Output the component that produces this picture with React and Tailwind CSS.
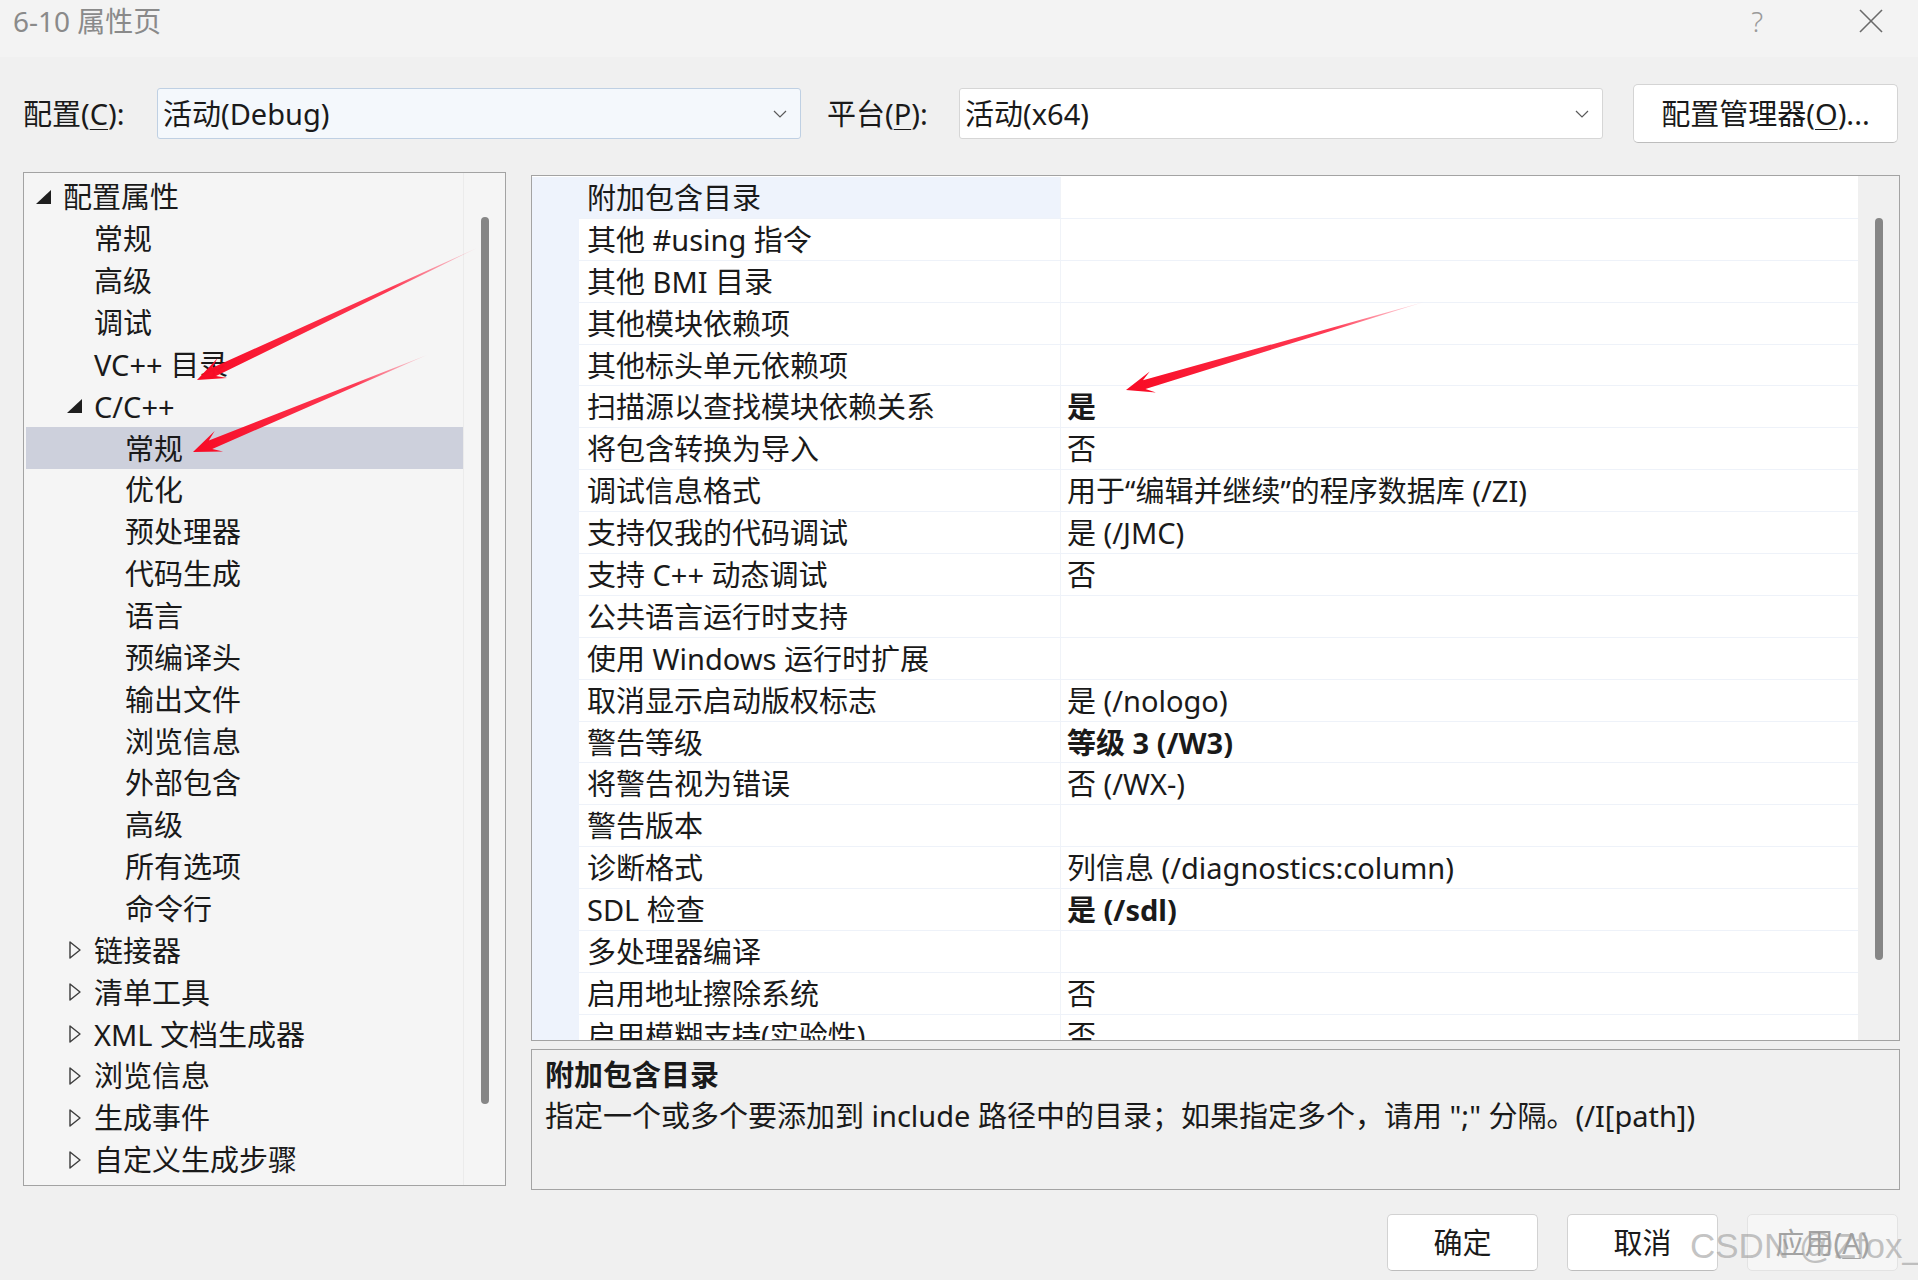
import React from 'react';

// 树形导航数据：[层级, 展开状态, 文本, 是否选中]
const treeItems = [
  [0, 'open', '配置属性'],
  [1, null, '常规'],
  [1, null, '高级'],
  [1, null, '调试'],
  [1, null, 'VC++ 目录'],
  [1, 'open', 'C/C++'],
  [2, null, '常规', true],
  [2, null, '优化'],
  [2, null, '预处理器'],
  [2, null, '代码生成'],
  [2, null, '语言'],
  [2, null, '预编译头'],
  [2, null, '输出文件'],
  [2, null, '浏览信息'],
  [2, null, '外部包含'],
  [2, null, '高级'],
  [2, null, '所有选项'],
  [2, null, '命令行'],
  [1, 'closed', '链接器'],
  [1, 'closed', '清单工具'],
  [1, 'closed', 'XML 文档生成器'],
  [1, 'closed', '浏览信息'],
  [1, 'closed', '生成事件'],
  [1, 'closed', '自定义生成步骤'],
];

// 属性表：[名称, 值, 是否加粗]
const props = [
  ['附加包含目录', ''],
  ['其他 #using 指令', ''],
  ['其他 BMI 目录', ''],
  ['其他模块依赖项', ''],
  ['其他标头单元依赖项', ''],
  ['扫描源以查找模块依赖关系', '是', true],
  ['将包含转换为导入', '否'],
  ['调试信息格式', '用于“编辑并继续”的程序数据库 (/ZI)'],
  ['支持仅我的代码调试', '是 (/JMC)'],
  ['支持 C++ 动态调试', '否'],
  ['公共语言运行时支持', ''],
  ['使用 Windows 运行时扩展', ''],
  ['取消显示启动版权标志', '是 (/nologo)'],
  ['警告等级', '等级 3 (/W3)', true],
  ['将警告视为错误', '否 (/WX-)'],
  ['警告版本', ''],
  ['诊断格式', '列信息 (/diagnostics:column)'],
  ['SDL 检查', '是 (/sdl)', true],
  ['多处理器编译', ''],
  ['启用地址擦除系统', '否'],
  ['启用模糊支持(实验性)', '否'],
];

const Chevron = () => (
  <svg width="14" height="8" viewBox="0 0 14 8" className="shrink-0">
    <polyline points="1,1 7,7 13,1" fill="none" stroke="#5a5a5a" strokeWidth="1.2" />
  </svg>
);

const Toggle = ({ state, level }) => {
  if (state === 'open') {
    return (
      <svg width="15" height="14" viewBox="0 0 15 14" className={level === 0 ? 'ml-[5px]' : 'ml-[5px]'}>
        <polygon points="15,0 15,14 0,14" fill="#1e1e1e" />
      </svg>
    );
  }
  if (state === 'closed') {
    return (
      <svg width="12" height="18" viewBox="0 0 12 18" className="ml-[7px]">
        <polygon points="1,1 11,9 1,17" fill="none" stroke="#3c3c3c" strokeWidth="1.4" strokeLinejoin="round" />
      </svg>
    );
  }
  return null;
};

const indent = ['pl-[5px]', 'pl-[36px]', 'pl-[67px]'];

const Tree = () => (
  <div className="w-[483px] h-[1014px] border border-[#a3a3a3] bg-[#f5f5f5] flex">
    <div className="flex-1 pl-[2px] pt-[3px] flex flex-col">
      {treeItems.map(([level, state, text, selected], i) => (
        <div
          key={i}
          className={`h-[41.86px] flex items-center ${indent[level]} ${selected ? 'bg-[#cdd0dc]' : ''}`}
        >
          <div className="w-[32px] flex items-center">
            <Toggle state={state} level={level} />
          </div>
          <span className="whitespace-nowrap">{text}</span>
        </div>
      ))}
    </div>
    <div className="w-[42px] border-l border-[#ebebeb] pt-[44px] flex justify-center">
      <div className="w-[8px] h-[887px] rounded-full bg-[#868686]" />
    </div>
  </div>
);

const Grid = () => (
  <div className="h-[866px] border border-[#a3a3a3] bg-white flex overflow-hidden">
    <div className="flex-1 flex flex-col pt-[1px] overflow-hidden">
      {props.map(([name, value, bold], i) => (
        <div key={i} className="h-[41.9px] shrink-0 flex">
          <div className="w-[47px] bg-[#eef3fc]" />
          <div className="flex-1 flex border-b border-[#eef2f9]">
            <div
              className={`w-[482px] flex items-center pl-[8px] border-r border-[#f0f3f8] whitespace-nowrap ${i === 0 ? 'bg-[#eef3fc]' : ''}`}
            >
              {name}
            </div>
            <div className={`flex-1 flex items-center pl-[6px] whitespace-nowrap ${bold ? 'font-bold' : ''}`}>
              {value}
            </div>
          </div>
        </div>
      ))}
    </div>
    <div className="w-[41px] bg-[#f0f0f0] pt-[42px] flex justify-center">
      <div className="w-[8px] h-[742px] rounded-full bg-[#868686]" />
    </div>
  </div>
);

// 红色标注箭头（截图上的手绘标记）
const Arrow = ({ from, to, id }) => {
  const [tx, ty] = from;
  const [hx, hy] = to;
  const dx = hx - tx;
  const dy = hy - ty;
  const len = Math.hypot(dx, dy);
  const ux = dx / len;
  const uy = dy / len;
  const px = -uy;
  const py = ux;
  const head = 28, half = 11, neck = 19, shaft = 4.5;
  const bx = hx - ux * head, by = hy - uy * head;
  const nx = hx - ux * neck, ny = hy - uy * neck;
  const pts = [
    [tx, ty],
    [nx + px * shaft, ny + py * shaft],
    [bx + px * half, by + py * half],
    [hx, hy],
    [bx - px * half, by - py * half],
    [nx - px * shaft, ny - py * shaft],
  ]
    .map((p) => p.join(','))
    .join(' ');
  return (
    <>
      <defs>
        <linearGradient id={id} gradientUnits="userSpaceOnUse" x1={tx} y1={ty} x2={hx} y2={hy}>
          <stop offset="0" stopColor="#ff4060" stopOpacity="0.15" />
          <stop offset="0.3" stopColor="#ff1a38" stopOpacity="0.85" />
          <stop offset="1" stopColor="#f80a24" stopOpacity="1" />
        </linearGradient>
      </defs>
      <polygon points={pts} fill={`url(#${id})`} />
    </>
  );
};

const Btn = ({ children, disabled }) => (
  <div
    className={`w-[151px] h-[57px] rounded-[5px] border flex items-center justify-center ${
      disabled ? 'bg-[#f6f6f6] border-[#e3e3e3] text-[#a3a3a3]' : 'bg-white border-[#d2d2d2] border-b-[#bdbdbd]'
    }`}
  >
    {children}
  </div>
);

const U = ({ children }) => <span className="underline underline-offset-[4px] decoration-1">{children}</span>;

export default function App() {
  return (
    <div className="relative w-[1918px] h-[1280px] overflow-hidden bg-[#f0f0f0] text-[29px] leading-none text-[#1a1a1a] font-['Noto_Sans','Noto_Sans_CJK_SC',sans-serif]">
      {/* 标题栏 */}
      <div className="h-[57px] bg-[#f3f3f3]">
        <div className="h-[42px] flex items-center pl-[13px] pr-[34px]">
          <span className="text-[28px] text-[#8a8a8a]">6-10 属性页</span>
          <span className="ml-auto text-[28px] font-light text-[#9a9a9a]">?</span>
          <svg width="26" height="24" viewBox="0 0 26 24" className="ml-[95px]">
            <line x1="2" y1="1" x2="24" y2="23" stroke="#6a6a6a" strokeWidth="1.6" />
            <line x1="24" y1="1" x2="2" y2="23" stroke="#6a6a6a" strokeWidth="1.6" />
          </svg>
        </div>
      </div>

      {/* 配置 / 平台 */}
      <div className="mt-[27px] h-[59px] flex items-center pl-[23px]">
        <span className="w-[134px] whitespace-nowrap">
          配置(<U>C</U>):
        </span>
        <div className="w-[644px] h-[51px] border border-[#bfd0e3] bg-[#f4f8fc] rounded-[3px] flex items-center pl-[5px] pr-[13px]">
          <span>活动(Debug)</span>
          <span className="ml-auto">
            <Chevron />
          </span>
        </div>
        <span className="ml-[26px] w-[132px] whitespace-nowrap">
          平台(<U>P</U>):
        </span>
        <div className="w-[644px] h-[51px] border border-[#d6d6d6] bg-white rounded-[3px] flex items-center pl-[5px] pr-[13px]">
          <span>活动(x64)</span>
          <span className="ml-auto">
            <Chevron />
          </span>
        </div>
        <div className="ml-[30px] w-[265px] h-[59px] rounded-[5px] border border-[#d4d4d4] border-b-[#bdbdbd] bg-white flex items-center justify-center whitespace-nowrap">
          配置管理器(<U>O</U>)...
        </div>
      </div>

      {/* 主区域 */}
      <div className="mt-[29px] flex items-start pl-[23px]">
        <Tree />
        <div className="ml-[25px] mt-[3px] w-[1369px] flex flex-col">
          <Grid />
          <div className="mt-[8px] h-[141px] border border-[#a3a3a3] bg-[#f0f0f0] pl-[13px] pt-[10px]">
            <div className="font-bold">附加包含目录</div>
            <div className="mt-[12px] whitespace-nowrap">
              指定一个或多个要添加到 include 路径中的目录；如果指定多个，请用 ";" 分隔。(/I[path])
            </div>
          </div>
        </div>
      </div>

      {/* 底部按钮 */}
      <div className="mt-[24px] flex justify-end gap-[29px] pr-[20px]">
        <Btn>确定</Btn>
        <Btn>取消</Btn>
        <Btn disabled>
          应用(<U>A</U>)
        </Btn>
      </div>

      {/* 标注与水印 */}
      <svg className="absolute left-0 top-0 pointer-events-none" width="1918" height="1280">
        <Arrow id="a1" from={[477, 248]} to={[197, 380]} />
        <Arrow id="a2" from={[427, 355]} to={[193, 452]} />
        <Arrow id="a3" from={[1424, 302]} to={[1126, 390]} />
      </svg>
      <div className="absolute left-[1690px] top-[1228px] text-[35px] leading-none text-[#9c9c9c]/60 font-['Liberation_Sans',Arial,sans-serif] whitespace-nowrap pointer-events-none">
        CSDN @Zfox_
      </div>
    </div>
  );
}
